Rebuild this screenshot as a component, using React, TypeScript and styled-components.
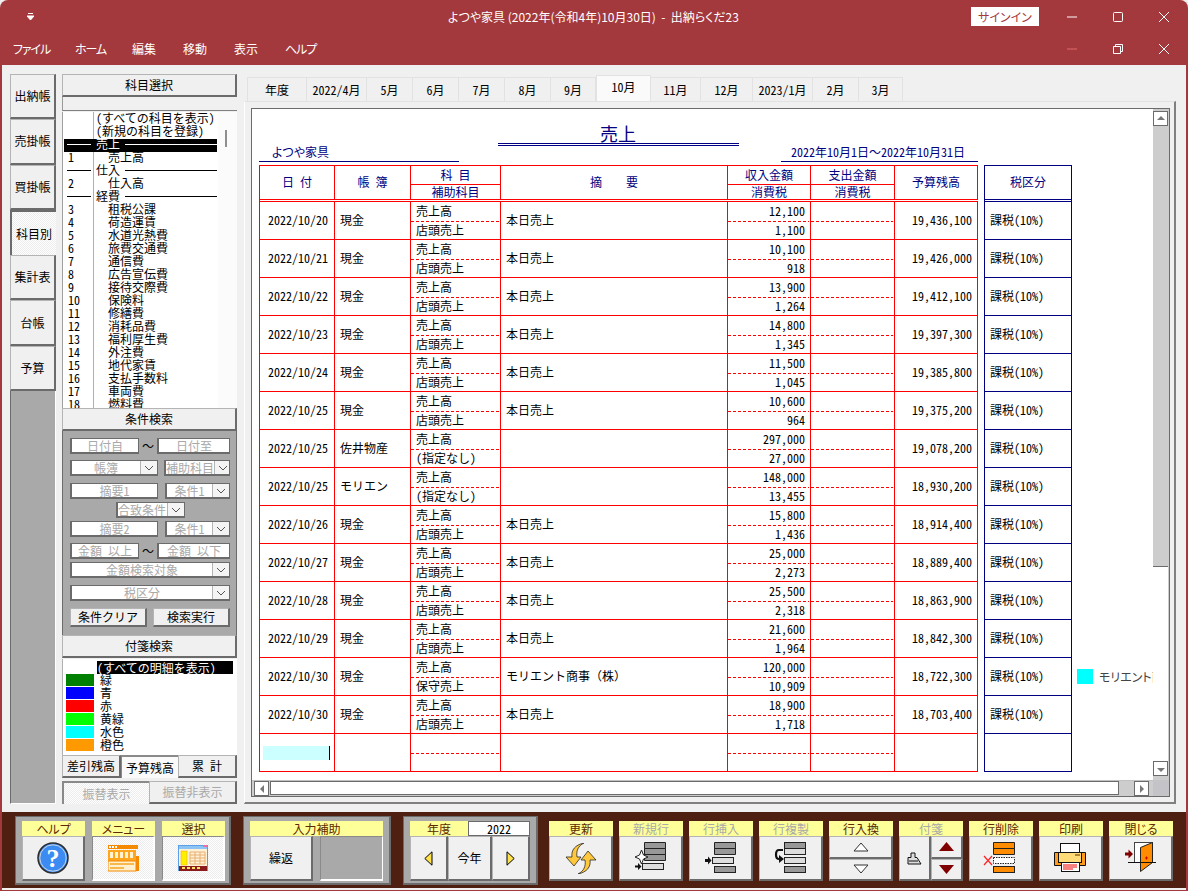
import React from 'react';
import styled, { createGlobalStyle, css } from 'styled-components';

const RED = '#a4393d';
const GRAY = '#a9a9a9';
const PANEL = '#f0f0f0';
const NAVY = '#000080';

const GlobalStyle = createGlobalStyle`
  * { box-sizing: border-box; }
  html, body { margin: 0; padding: 0; background: ${PANEL}; }
  body {
    font-family: "Noto Sans CJK JP", "Liberation Sans", sans-serif;
    font-size: 12px;
    line-height: 1;
    font-feature-settings: "hwid";
    color: #000;
  }
`;

const raised = css`
  border-style: solid;
  border-width: 1px 2px 2px 1px;
  border-color: #b4b4b4 #6b6b6b #6b6b6b #b4b4b4;
  background: ${PANEL};
`;

const stipple = css`
  background: repeating-conic-gradient(#fff 0 25%, #ececec 0 50%) 0 0 / 2px 2px;
`;

const Window = styled.div`
  width: 1188px;
  height: 891px;
  background: ${RED};
  border-radius: 8px 8px 0 0;
  overflow: hidden;
  display: flex;
  flex-direction: column;
  padding: 0 2px 1px 2px;
`;

const TitleBar = styled.div`
  height: 33px;
  margin: 0 -2px;
  padding-right: 1px;
  display: grid;
  grid-template-columns: 1fr auto 1fr;
  align-items: center;
  color: #fff;
  font-feature-settings: "palt";
`;

const QuickAccess = styled.div`
  padding-left: 27px;
  display: flex;
`;

const TitleText = styled.div`
  font-size: 12px;
  white-space: pre;
`;

const TitleRight = styled.div`
  display: flex;
  justify-content: flex-end;
  align-items: center;
`;

const SignIn = styled.div`
  width: 68px;
  height: 19px;
  margin-right: 10px;
  background: #fff;
  color: ${RED};
  font-size: 12px;
  display: flex;
  align-items: center;
  justify-content: center;
`;

const WinButton = styled.div`
  width: 46px;
  display: flex;
  justify-content: center;
  align-items: center;
`;

const MenuBar = styled.div`
  height: 32px;
  margin: 0 -2px;
  padding: 0 1px 0 13px;
  display: flex;
  align-items: center;
  color: #fff;
  font-feature-settings: "palt";
`;

const MenuItem = styled.div<{ $w: number; $kana?: boolean }>`
  width: ${(p) => p.$w}px;
  flex: none;
  white-space: nowrap;
  font-size: 12px;
  letter-spacing: ${(p) => (p.$kana ? -1.1 : 0)}px;
`;

const MenuSpacer = styled.div`
  flex: 1;
`;

const Client = styled.div`
  flex: 1;
  min-height: 0;
  background: ${PANEL};
  display: flex;
  flex-direction: column;
  padding-bottom: 2px;
`;

const Workspace = styled.div`
  flex: 1;
  min-height: 0;
  display: flex;
  padding: 9px 10px 8px 8px;
`;

const SideCol = styled.div`
  width: 46px;
  display: flex;
  flex-direction: column;
  margin-right: 6px;
`;

const SideTab = styled.div<{ $active?: boolean }>`
  height: 45.3px;
  flex: none;
  display: flex;
  align-items: center;
  justify-content: center;
  font-size: 12px;
  ${raised}
  ${(p) => p.$active && css`
    ${stipple}
    border-color: #6b6b6b #f0f0f0 #f0f0f0 #6b6b6b;
    border-width: 2px 0 0 2px;
  `}
`;

const SideFill = styled.div`
  flex: 1;
  background: ${GRAY};
  border-left: 1px solid #6b6b6b;
  border-right: 1px solid #fff;
  border-bottom: 1px solid #fff;
`;

const PanelCol = styled.div`
  width: 175px;
  display: flex;
  flex-direction: column;
  margin-right: 7px;
`;

const PanelHead = styled.div`
  height: 23px;
  flex: none;
  display: flex;
  align-items: center;
  justify-content: center;
  ${raised}
`;

const Strip = styled.div`
  height: 14px;
  flex: none;
  background: ${PANEL};
  border-left: 1px solid #9a9a9a;
  border-bottom: 1px solid #808080;
`;

const ListWrap = styled.div`
  height: 296px;
  flex: none;
  display: flex;
  margin-top: 1px;
  background: #fbfbfb;
`;

const SubjectList = styled.div`
  width: 156px;
  padding: 1px 0 0 1px;
  background: #fff;
  overflow: hidden;
  background-image: linear-gradient(#b0b0b0, #b0b0b0);
  background-size: 1px 100%;
  background-position: 30px 0;
  background-repeat: no-repeat;
  border-left: 1px solid #a0a0a0;
`;

const ListScroll = styled.div`
  flex: 1;
  padding: 18px 0 0 7px;
`;

const ListThumb = styled.div`
  width: 2px;
  height: 17px;
  background: #8f8f8f;
`;

const SubjectRow = styled.div<{ $selected?: boolean }>`
  height: 13px;
  display: flex;
  align-items: center;
  white-space: nowrap;
  width: 153px;
  ${(p) => p.$selected && 'background: #000; color: #fff;'}
`;

const RowText = styled.span`
  margin-top: -4px;
`;

const RowNo = styled(RowText)`
  width: 32px;
  padding-left: 4px;
  flex: none;
`;

const RowName = styled(RowText)`
  padding-left: 12px;
`;

const RuleShort = styled.span`
  width: 24px;
  height: 1px;
  margin: -2px 5px 0 3px;
  background: currentColor;
  flex: none;
`;

const RuleLong = styled.span`
  flex: 1;
  height: 1px;
  margin: -2px 0 0 5px;
  background: currentColor;
`;

const SearchPanel = styled.div`
  height: 204px;
  flex: none;
  background: ${GRAY};
  border-left: 1px solid #6b6b6b;
  border-right: 1px solid #6b6b6b;
  padding: 7px 6px 0 7px;
`;

const SearchRow = styled.div<{ $top: number; $center?: boolean }>`
  display: flex;
  align-items: center;
  margin-top: ${(p) => p.$top}px;
  justify-content: ${(p) => (p.$center ? 'center' : 'space-between')};
`;

const Field = styled.div<{ $w?: number }>`
  height: 16px;
  width: ${(p) => (p.$w ? `${p.$w}px` : '100%')};
  flex: none;
  background: #fff;
  color: ${GRAY};
  border: 1px solid #6b6b6b;
  border-bottom-width: 2px;
  border-left-width: 2px;
  display: flex;
  align-items: center;
  overflow: hidden;
  white-space: nowrap;
`;

const FieldText = styled.span`
  flex: 1;
  text-align: center;
`;

const Drop = styled.span`
  width: 17px;
  height: 14px;
  flex: none;
  background: #f4f4f4;
  border-left: 1px solid #b4b4b4;
  display: flex;
  align-items: center;
  justify-content: center;
`;

// full-width glyphs, where the page-wide half-width feature would squeeze them
const Wide = styled.span`
  font-feature-settings: normal;
`;

const Wave = styled(Wide)`
  width: 18px;
  text-align: center;
  flex: none;
`;

const SearchButton = styled.div`
  width: 77px;
  height: 19px;
  display: flex;
  align-items: center;
  justify-content: center;
  ${raised}
`;

const NoteList = styled.div`
  height: 96px;
  flex: none;
  background: #fff;
  margin-top: 1px;
  padding: 2px 0 0 3px;
  border-left: 1px solid #b0b0b0;
`;

const NoteRow = styled.div`
  height: 13px;
  display: flex;
  align-items: center;
`;

const Swatch = styled.span<{ $color?: string }>`
  width: 28px;
  height: 12px;
  flex: none;
  margin: -2px 6px 0 0;
  background: ${(p) => p.$color || 'transparent'};
`;

const NoteName = styled.span`
  margin-top: -2px;
`;

const NoteAll = styled.span`
  width: 136px;
  margin-left: -3px;
  height: 13px;
  line-height: 13px;
  background: #000;
  color: #fff;
`;

const TabsRow = styled.div`
  display: flex;
  flex: none;
  height: 23px;
`;

const BalanceTab = styled.div<{ $active?: boolean }>`
  flex: 1;
  display: flex;
  align-items: center;
  justify-content: center;
  ${raised}
  ${(p) => p.$active && css`
    background: #fafafa;
    border-width: 2px 0 0 1px;
    border-color: #8a8a8a;
  `}
`;

const TransferRow = styled.div`
  display: flex;
  flex: none;
  height: 23px;
  margin-top: 3px;
`;

const TransferButton = styled.div<{ $active?: boolean }>`
  flex: 1;
  display: flex;
  align-items: center;
  justify-content: center;
  color: ${GRAY};
  ${raised}
  ${(p) => p.$active && css`
    ${stipple}
    border-width: 2px 0 0 2px;
    border-color: #8a8a8a #fff #fff #8a8a8a;
  `}
`;

const MainCol = styled.div`
  flex: 1;
  min-width: 0;
  display: flex;
  flex-direction: column;
  padding-top: 1px;
`;

const MonthTabs = styled.div`
  display: flex;
  align-items: flex-end;
  height: 26px;
  flex: none;
  padding-left: 3px;
`;

const MonthTab = styled.div<{ $w: number; $active?: boolean }>`
  width: ${(p) => p.$w}px;
  height: ${(p) => (p.$active ? 26 : 24)}px;
  flex: none;
  display: flex;
  align-items: center;
  justify-content: center;
  background: ${(p) => (p.$active ? '#fafafa' : PANEL)};
  border: 1px solid #e2e2e2;
  border-bottom: 0;
  border-left-width: ${(p) => (p.$active ? 1 : 0)}px;
  padding-bottom: ${(p) => (p.$active ? 3 : 0)}px;
  &:first-child { border-left-width: 1px; }
`;

const TabPage = styled.div`
  flex: 1;
  min-height: 0;
  border-top: 1px solid #e2e2e2;
  border-left: 1px solid #fff;
  border-right: 2px solid #808080;
  border-bottom: 2px solid #808080;
  padding: 6px 4px 5px 6px;
  display: flex;
`;

const Frame = styled.div`
  flex: 1;
  min-width: 0;
  border: 1px solid #6b6b6b;
  background: #fff;
  display: grid;
  grid-template-columns: 1fr 16px;
  grid-template-rows: 1fr 16px;
`;

const Sheet = styled.div`
  padding-left: 7px;
  overflow: hidden;
  min-width: 0;
  min-height: 0;
`;

const SheetHead = styled.div`
  height: 56px;
  width: 719px;
  display: grid;
  grid-template-columns: 200px 241px 197px;
  justify-content: space-between;
  color: ${NAVY};
`;

const Company = styled.div`
  align-self: end;
  height: 18px;
  margin-bottom: 3px;
  padding-left: 13px;
  border-bottom: 1px solid ${NAVY};
  font-feature-settings: "palt";
  line-height: 15px;
`;

const Title = styled.div`
  align-self: start;
  margin: 15px 2px 0 -2px;
  height: 22px;
  border-bottom: 3px double ${NAVY};
  font-size: 18px;
  line-height: 19px;
  text-align: center;
`;

const Period = styled.div`
  align-self: end;
  height: 18px;
  margin-bottom: 3px;
  padding-left: 10px;
  border-bottom: 1px solid ${NAVY};
  line-height: 15px;
  white-space: nowrap;
`;

const LedgerRow = styled.div`
  display: flex;
  white-space: nowrap;
  height: 38px;
`;

const HeadRow = styled(LedgerRow)`
  height: 37px;
`;

const Cells = styled.div<{ $head?: boolean }>`
  width: 719px;
  flex: none;
  display: grid;
  grid-template-columns: 75px 76px 90px 227px 83px 84px 83px;
  border-left: 1px solid #f00;
  border-bottom: 1px solid #f00;
  ${(p) => p.$head && css`
    border-top: 1px solid #f00;
    border-bottom: 3px double #f00;
    color: ${NAVY};
  `}
`;

const Cell = styled.div<{ $align?: 'left' | 'center' | 'right'; $stack?: boolean }>`
  border-right: 1px solid #f00;
  display: flex;
  min-width: 0;
  ${(p) => (p.$stack
    ? 'flex-direction: column;'
    : css`
      align-items: center;
      justify-content: ${p.$align === 'right' ? 'flex-end' : p.$align === 'center' ? 'center' : 'flex-start'};
      padding: 0 5px 2px;
    `)}
`;

const DateCell = styled(Cell)`
  justify-content: flex-end;
  padding: 0 6px 2px 0;
`;

const Upper = styled.div<{ $right?: boolean }>`
  height: 19px;
  display: flex;
  align-items: center;
  padding: 0 5px 2px;
  justify-content: ${(p) => (p.$right ? 'flex-end' : 'flex-start')};
`;

const Lower = styled(Upper)`
  height: 17px;
`;

const Dash = styled.div`
  height: 1px;
  flex: none;
  margin-right: 1px;
  background: repeating-linear-gradient(90deg, #f00 0 3px, transparent 3px 5px);
`;

const HeadUpper = styled.div`
  height: 19px;
  display: flex;
  align-items: center;
  justify-content: center;
  border-bottom: 1px solid #f00;
`;

const HeadLower = styled.div`
  height: 14px;
  display: flex;
  align-items: center;
  justify-content: center;
`;

const TaxCell = styled.div<{ $head?: boolean }>`
  width: 88px;
  flex: none;
  margin-left: 6px;
  border-left: 1px solid ${NAVY};
  border-right: 1px solid ${NAVY};
  border-bottom: 1px solid ${NAVY};
  display: flex;
  align-items: center;
  padding: 0 0 2px 5px;
  ${(p) => p.$head && css`
    border-top: 1px solid ${NAVY};
    border-bottom: 3px double ${NAVY};
    color: ${NAVY};
    justify-content: center;
    padding-left: 0;
  `}
`;

const NoteCell = styled.div`
  margin-left: 5px;
  display: flex;
  align-items: center;
  color: #444;
  font-feature-settings: "palt";
  padding-bottom: 1px;
`;

const NoteChip = styled.span`
  width: 16px;
  height: 15px;
  margin-right: 6px;
  background: #0ff;
  flex: none;
`;

const EntryBox = styled.div`
  width: 67px;
  height: 14px;
  margin: 0 0 0 3px;
  background: #ccffff;
  border-right: 1px solid #000;
`;

const EntryCell = styled.div`
  border-right: 1px solid #f00;
  display: flex;
  align-items: center;
  padding-top: 1px;
`;

const VBar = styled.div`
  background: #cdcdcd;
  display: flex;
  flex-direction: column;
  padding-top: 2px;
  padding-right: 1px;
`;

const ScrollBtn = styled.div`
  width: 15px;
  height: 15px;
  flex: none;
  background: #fff;
  border: 1px solid #6b6b6b;
  display: flex;
  align-items: center;
  justify-content: center;
`;

const VThumb = styled.div`
  flex: none;
  height: 195px;
  background: #fff;
  border-top: 1px solid #6b6b6b;
`;

const VTrack = styled.div`
  flex: 1;
`;

const VBottom = styled.div`
  height: 4px;
  flex: none;
`;

const HBar = styled.div`
  background: #cdcdcd;
  display: flex;
  padding: 0 4px 1px 2px;
  border-top: 1px solid #c0c0c0;
`;

const HThumb = styled.div`
  flex: none;
  width: 849px;
  margin-left: 1px;
  background: #fff;
  border: 1px solid #6b6b6b;
`;

const Corner = styled.div`
  background: #c4c4c8;
`;

const Toolbar = styled.div`
  height: 76px;
  flex: none;
  background: #4f2012;
  display: flex;
  padding: 4px 0 0 13px;
`;

const Group = styled.div<{ $w: number; $gap?: number }>`
  width: ${(p) => p.$w}px;
  height: 69px;
  flex: none;
  margin-right: 12px;
  padding: 4px 0 0 6px;
  background: ${GRAY};
  border: 1px solid #6b6b6b;
  border-bottom-width: 2px;
  border-right-width: 2px;
  display: flex;
  gap: ${(p) => p.$gap ?? 0}px;
`;

const Tool = styled.div<{ $w: number }>`
  width: ${(p) => p.$w}px;
  flex: none;
  display: flex;
  flex-direction: column;
`;

const ToolLabel = styled.div<{ $off?: boolean }>`
  height: 15px;
  flex: none;
  background: #ffff99;
  color: ${(p) => (p.$off ? GRAY : '#5c2a00')};
  display: flex;
  align-items: center;
  justify-content: center;
  font-feature-settings: "palt";
`;

const ToolButton = styled.div<{ $flat?: boolean }>`
  height: 45px;
  flex: none;
  display: flex;
  align-items: center;
  justify-content: center;
  ${raised}
  ${(p) => p.$flat && css`
    ${stipple}
    border-color: #8a8a8a #fff #fff #8a8a8a;
  `}
`;

const BlankButton = styled(ToolButton)`
  background: ${GRAY};
  border-color: #8a8a8a #fff #fff #8a8a8a;
  border-width: 1px 1px 2px 1px;
`;

const SplitTool = styled.div`
  display: flex;
  gap: 7px;
  height: 45px;
`;

const ToolRow = styled.div`
  display: flex;
  height: 15px;
`;

const YearLabel = styled(ToolLabel)`
  width: 58px;
`;

const YearValue = styled.div`
  flex: 1;
  background: #fff;
  border: 1px solid #6b6b6b;
  display: flex;
  align-items: center;
  justify-content: center;
`;

const YearButtons = styled.div`
  display: flex;
  height: 45px;
`;

const YearButton = styled(ToolButton)<{ $w: number }>`
  width: ${(p) => p.$w}px;
`;

const RightTools = styled.div`
  display: flex;
  gap: 6px;
  margin-left: -1px;
  padding-top: 5px;
`;

const PairButton = styled.div`
  flex: 1;
  min-height: 0;
  display: flex;
  align-items: center;
  justify-content: center;
  ${raised}
`;

const PairCol = styled.div<{ $w: number }>`
  width: ${(p) => p.$w}px;
  height: 45px;
  flex: none;
  display: flex;
  flex-direction: column;
`;

const PairRow = styled.div`
  display: flex;
  height: 45px;
`;

const PairSide = styled.div`
  width: 32px;
  height: 45px;
  display: flex;
  align-items: center;
  justify-content: center;
  ${raised}
`;

// ---- icons ----

const Chevron = () => (
  <svg width="10" height="6" viewBox="0 0 10 6"><path d="M1 1l4 4 4-4" fill="none" stroke="#555" strokeWidth="1" /></svg>
);

const QatIcon = () => (
  <svg width="7" height="7" viewBox="0 0 7 7"><path d="M1 .5h5M0 3h7L3.500 7z" stroke="#fff" strokeWidth="1" fill="#fff" /></svg>
);

const WinMin = ({ color = '#fff' }: { color?: string }) => (
  <svg width="10" height="10" viewBox="0 0 10 10"><path d="M0 5h10" stroke={color} strokeWidth="1" /></svg>
);

const WinMax = () => (
  <svg width="10" height="10" viewBox="0 0 10 10"><rect x=".5" y=".5" width="9" height="9" rx="1" fill="none" stroke="#fff" /></svg>
);

const WinRestore = () => (
  <svg width="10" height="10" viewBox="0 0 10 10"><path d="M.5 2.500h7v7h-7zM2.500 2.500v-2h7v7h-2" fill="none" stroke="#fff" /></svg>
);

const WinClose = () => (
  <svg width="10" height="10" viewBox="0 0 10 10"><path d="M0 0l10 10M10 0L0 10" stroke="#fff" strokeWidth="1" /></svg>
);

const Tri = ({ dir }: { dir: 'up' | 'down' | 'left' | 'right' }) => {
  const d = {
    up: 'M4 1L8 5H0z', down: 'M4 7L0 3h8z', left: 'M2 4l4-4v8z', right: 'M6 4L2 0v8z',
  }[dir];
  return <svg width="8" height="8" viewBox="0 0 8 8"><path d={d} fill="#777" /></svg>;
};

const HelpIcon = () => (
  <svg width="32" height="32" viewBox="0 0 32 32">
    <circle cx="16" cy="16" r="15" fill="#3b8bf2" stroke="#2c2c2c" strokeWidth="1.500" />
    <circle cx="16" cy="16" r="13.200" fill="none" stroke="#c8d4e4" strokeWidth="1" />
    <text x="16" y="25" textAnchor="middle" fontFamily="Liberation Serif" fontWeight="bold" fontSize="26" fill="#fff">?</text>
  </svg>
);

const MenuIcon = () => (
  <svg width="31" height="27" viewBox="0 0 31 27">
    <rect x="0" y="0" width="30" height="4" fill="#f58a00" />
    <path d="M1 1h2v2H1zM4 1h2v2H4zM7 1h2v2H7z" fill="#fff" />
    <rect x="0" y="5" width="28" height="11" fill="#ffa51e" />
    <path d="M2 7h3v6H2zM7 7h3v6H7zM12 7h3v6h-3zM17 7h3v6h-3zM22 7h3v6h-3z" fill="#fff3d0" />
    <rect x="28" y="11" width="3" height="15" fill="#f58a00" />
    <rect x="0" y="16" width="28" height="10" fill="#fff1cf" stroke="#f58a00" />
    <path d="M2 19h24M2 23h14" stroke="#f5a623" strokeWidth="1.500" />
  </svg>
);

const SelectIcon = () => (
  <svg width="30" height="27" viewBox="0 0 30 27">
    <rect x=".5" y=".5" width="29" height="25" fill="#fff0d8" stroke="#5aa0e8" />
    <rect x="1" y="1" width="28" height="3" fill="#8cc4f4" />
    <rect x="25" y="0" width="4" height="2" fill="#f06ea0" />
    <rect x="3" y="6" width="6" height="14" fill="#ffee00" stroke="#e8a800" strokeWidth=".5" />
    <path d="M12 7h15v12H12zM12 10h15M12 13h15M12 16h15M17 7v12M22 7v12" fill="none" stroke="#e8b070" />
    <rect x="1" y="21" width="28" height="5" fill="#8b1a1a" />
    <path d="M4 23h3M9 23h3M14 23h3M19 23h3" stroke="#ffe060" strokeWidth="2" />
  </svg>
);

const LeftArrow = () => (
  <svg width="9" height="15" viewBox="0 0 9 15"><path d="M8 .8v13.400L.8 7.500z" fill="#ffe14d" stroke="#000" /></svg>
);

const RightArrow = () => (
  <svg width="9" height="15" viewBox="0 0 9 15"><path d="M1 .8v13.400L8.200 7.500z" fill="#ffe14d" stroke="#000" /></svg>
);

const RefreshIcon = () => (
  <svg width="32" height="31" viewBox="0 0 32 31">
    <path d="M19 0C10 2 6 7 7 14H1l8 9 7-9h-4C11 8 13 3 19 0z" fill="#ffc83c" stroke="#2a2a2a" strokeWidth=".8" />
    <path d="M13 31c9-2 13-7 12-14h6l-8-9-7 9h4c1 6-1 11-7 14z" fill="#ffc83c" stroke="#2a2a2a" strokeWidth=".8" />
  </svg>
);

const RowIcon = ({ children }: { children: React.ReactNode }) => (
  <svg width="61" height="42" viewBox="1 1 61 42">{children}</svg>
);

const NewRowIcon = () => (
  <RowIcon>
    <path d="M25.500 6.500h21v6h-21zM25.500 12.500h21v6h-21zM25.500 18.500h21v6h-21z" fill="#989898" stroke="#222" />
    <path d="M22.500 14l2 5 4.500 2-4.500 2-2 5-2-5-4.500-2 4.500-2z" fill="#fff" stroke="#222" />
    <rect x="23.500" y="27.500" width="21" height="6" fill="#ddd" stroke="#222" />
    <path d="M16 29.500h3v-2.500l3.500 3.500-3.500 3.500v-2.500h-3z" fill="#111" />
  </RowIcon>
);

const InsertRowIcon = () => (
  <RowIcon>
    <path d="M25.500 6.500h21v6h-21zM25.500 12.500h21v6h-21z" fill="#989898" stroke="#222" />
    <rect x="23.500" y="21.500" width="21" height="6" fill="#ddd" stroke="#222" />
    <rect x="25.500" y="30.500" width="21" height="6" fill="#989898" stroke="#222" />
    <path d="M16 23h3v-2.500l3.500 4-3.500 4V26h-3z" fill="#111" />
  </RowIcon>
);

const CopyRowIcon = () => (
  <RowIcon>
    <rect x="25.500" y="6.500" width="21" height="6" fill="#989898" stroke="#222" />
    <rect x="25.500" y="12.500" width="21" height="6" fill="#ddd" stroke="#222" />
    <rect x="25.500" y="21.500" width="21" height="6" fill="#ddd" stroke="#222" />
    <rect x="25.500" y="30.500" width="21" height="6" fill="#989898" stroke="#222" />
    <path d="M24 14h-4c-4 0-4 9 0 9" fill="none" stroke="#111" strokeWidth="2.200" />
    <path d="M20 19l5 4-5 4z" fill="#111" />
  </RowIcon>
);

const UpOutline = () => (
  <svg width="16" height="10" viewBox="0 0 16 10"><path d="M8 1l7 8H1z" fill="#fff" stroke="#333" /></svg>
);

const DownOutline = () => (
  <svg width="16" height="10" viewBox="0 0 16 10"><path d="M8 9L1 1h14z" fill="#fff" stroke="#333" /></svg>
);

const NoteTagIcon = () => (
  <svg width="15" height="13" viewBox="0 0 15 13">
    <path d="M1 5.500h3V1h4v4.500h2l4 6.500H1z" fill="#ddd" stroke="#111" />
    <path d="M2 9h9" stroke="#111" />
  </svg>
);

const SolidUp = () => (
  <svg width="15" height="9" viewBox="0 0 15 9"><path d="M7.500 0L15 9H0z" fill="#800000" /></svg>
);

const SolidDown = () => (
  <svg width="15" height="9" viewBox="0 0 15 9"><path d="M7.500 9L0 0h15z" fill="#800000" /></svg>
);

const DeleteRowIcon = () => (
  <RowIcon>
    <path d="M24.500 6.500h21v6h-21zM24.500 12.500h21v6h-21z" fill="#ff8c00" stroke="#222" />
    <rect x="24.500" y="21.500" width="21" height="6" fill="#fff" stroke="#222" strokeDasharray="1.500 1" />
    <rect x="24.500" y="30.500" width="21" height="6" fill="#ff8c00" stroke="#222" />
    <path d="M15 20l8 9M23 20l-8 9" stroke="#f22" strokeWidth="1.200" />
  </RowIcon>
);

const PrintIcon = () => (
  <RowIcon>
    <rect x="21.500" y="7.500" width="19" height="10" fill="#fff" stroke="#111" />
    <path d="M15.500 16.500h31v13h-31z" fill="#ff9a1a" stroke="#111" />
    <rect x="19.500" y="16.500" width="23" height="10" fill="#ffdc78" stroke="#111" />
    <rect x="36" y="18" width="5" height="2" fill="#b08030" />
    <rect x="22.500" y="26.500" width="18" height="9" fill="#fff" stroke="#111" />
    <path d="M24 29h14M24 31h14M24 33h10" stroke="#e00" />
  </RowIcon>
);

const CloseIcon = () => (
  <RowIcon>
    <rect x="25.500" y="6.500" width="18" height="20" fill="#fff" stroke="#444" />
    <path d="M43.500 6.500L31.500 11.500V35.500L43.500 26.500z" fill="#ff8c00" stroke="#222" />
    <path d="M19 26.500h28" stroke="#111" />
    <path d="M16 16.500h3.500v-3l4.500 4.500-4.500 4.500v-3H16z" fill="#800000" />
    <path d="M36 22h3M37.500 20.500v3" stroke="#c00" />
  </RowIcon>
);

// ---- data ----

const SUBJECTS: [string, string][] = [
  ['3', '租税公課'], ['4', '荷造運賃'], ['5', '水道光熱費'], ['6', '旅費交通費'], ['7', '通信費'],
  ['8', '広告宣伝費'], ['9', '接待交際費'], ['10', '保険料'], ['11', '修繕費'], ['12', '消耗品費'],
  ['13', '福利厚生費'], ['14', '外注費'], ['15', '地代家賃'], ['16', '支払手数料'], ['17', '車両費'], ['18', '燃料費'],
];

const NOTES: [string, string][] = [
  ['#008000', '緑'], ['#0000ff', '青'], ['#ff0000', '赤'], ['#00ff00', '黄緑'], ['#00ffff', '水色'], ['#ff9900', '橙色'],
];

const MONTHS: [string, number, boolean?][] = [
  ['年度', 60], ['2022/4月', 60], ['5月', 46], ['6月', 46], ['7月', 46], ['8月', 46], ['9月', 45],
  ['10月', 55, true], ['11月', 50], ['12月', 52], ['2023/1月', 60], ['2月', 46], ['3月', 44],
];

const MENUS: [string, number, boolean?][] = [
  ['ファイル', 62, true], ['ホーム', 57, true], ['編集', 51], ['移動', 51], ['表示', 51], ['ヘルプ', 40, true],
];

type Entry = {
  date: string; book: string; sub: string; memo: string; inc: string; tax: string; bal: string; note?: string;
};

const shop = (date: string, inc: string, tax: string, bal: string): Entry => ({
  date, book: '現金', sub: '店頭売上', memo: '本日売上', inc, tax, bal,
});

const ENTRIES: Entry[] = [
  shop('2022/10/20', '12,100', '1,100', '19,436,100'),
  shop('2022/10/21', '10,100', '918', '19,426,000'),
  shop('2022/10/22', '13,900', '1,264', '19,412,100'),
  shop('2022/10/23', '14,800', '1,345', '19,397,300'),
  shop('2022/10/24', '11,500', '1,045', '19,385,800'),
  shop('2022/10/25', '10,600', '964', '19,375,200'),
  {
    date: '2022/10/25', book: '佐井物産', sub: '(指定なし)', memo: '', inc: '297,000', tax: '27,000', bal: '19,078,200',
  },
  {
    date: '2022/10/25', book: 'モリエン', sub: '(指定なし)', memo: '', inc: '148,000', tax: '13,455', bal: '18,930,200',
  },
  shop('2022/10/26', '15,800', '1,436', '18,914,400'),
  shop('2022/10/27', '25,000', '2,273', '18,889,400'),
  shop('2022/10/28', '25,500', '2,318', '18,863,900'),
  shop('2022/10/29', '21,600', '1,964', '18,842,300'),
  {
    date: '2022/10/30', book: '現金', sub: '保守売上', memo: 'モリエント商事（株）', inc: '120,000', tax: '10,909', bal: '18,722,300', note: 'モリエント商',
  },
  shop('2022/10/30', '18,900', '1,718', '18,703,400'),
];

const Section = ({ name, selected }: { name: string; selected?: boolean }) => (
  <SubjectRow $selected={selected}>
    <RuleShort />
    <RowText>{name}</RowText>
    <RuleLong />
  </SubjectRow>
);

const Subject = ({ no, name }: { no: string; name: string }) => (
  <SubjectRow>
    <RowNo>{no}</RowNo>
    <RowName>{name}</RowName>
  </SubjectRow>
);

const Combo = ({ w, text }: { w?: number; text: string }) => (
  <Field $w={w}>
    <FieldText>{text}</FieldText>
    <Drop><Chevron /></Drop>
  </Field>
);

const Input = ({ w, text }: { w: number; text: string }) => (
  <Field $w={w}><FieldText>{text}</FieldText></Field>
);

const SubjectPanel = () => (
  <>
    <PanelHead>科目選択</PanelHead>
    <Strip />
    <ListWrap>
      <SubjectList>
        <SubjectRow><RowNo /><RowText>（すべての科目を表示）</RowText></SubjectRow>
        <SubjectRow><RowNo /><RowText>（新規の科目を登録）</RowText></SubjectRow>
        <Section name="売上" selected />
        <Subject no="1" name="売上高" />
        <Section name="仕入" />
        <Subject no="2" name="仕入高" />
        <Section name="経費" />
        {SUBJECTS.map(([no, name]) => <Subject key={no} no={no} name={name} />)}
      </SubjectList>
      <ListScroll><ListThumb /></ListScroll>
    </ListWrap>
  </>
);

const ConditionPanel = () => (
  <>
    <PanelHead>条件検索</PanelHead>
    <SearchPanel>
      <SearchRow $top={0}><Input w={69} text="日付自" /><Wave>～</Wave><Input w={73} text="日付至" /></SearchRow>
      <SearchRow $top={6}><Combo w={88} text="帳簿" /><Combo w={66} text="補助科目" /></SearchRow>
      <SearchRow $top={7}><Input w={88} text="摘要1" /><Combo w={65} text="条件1" /></SearchRow>
      <SearchRow $top={3} $center><Combo w={69} text="合致条件" /></SearchRow>
      <SearchRow $top={3}><Input w={88} text="摘要2" /><Combo w={65} text="条件1" /></SearchRow>
      <SearchRow $top={6}><Input w={69} text="金額 以上" /><Wave>～</Wave><Input w={73} text="金額 以下" /></SearchRow>
      <SearchRow $top={3}><Combo text="金額検索対象" /></SearchRow>
      <SearchRow $top={7}><Combo text="税区分" /></SearchRow>
      <SearchRow $top={7}><SearchButton>条件クリア</SearchButton><SearchButton>検索実行</SearchButton></SearchRow>
    </SearchPanel>
  </>
);

const NotePanel = () => (
  <>
    <PanelHead>付箋検索</PanelHead>
    <NoteList>
      <NoteRow><Swatch /><NoteAll>（すべての明細を表示）</NoteAll></NoteRow>
      {NOTES.map(([color, name]) => (
        <NoteRow key={name}><Swatch $color={color} /><NoteName>{name}</NoteName></NoteRow>
      ))}
    </NoteList>
    <TabsRow>
      <BalanceTab>差引残高</BalanceTab>
      <BalanceTab $active>予算残高</BalanceTab>
      <BalanceTab>累 計</BalanceTab>
    </TabsRow>
    <TransferRow>
      <TransferButton $active>振替表示</TransferButton>
      <TransferButton>振替非表示</TransferButton>
    </TransferRow>
  </>
);

const EntryRow = ({ e }: { e: Entry }) => (
  <LedgerRow>
    <Cells>
      <DateCell>{e.date}</DateCell>
      <Cell>{e.book}</Cell>
      <Cell $stack>
        <Upper>売上高</Upper>
        <Dash />
        <Lower>{e.sub}</Lower>
      </Cell>
      <Cell><Wide>{e.memo}</Wide></Cell>
      <Cell $stack>
        <Upper $right>{e.inc}</Upper>
        <Dash />
        <Lower $right>{e.tax}</Lower>
      </Cell>
      <Cell $stack>
        <Upper />
        <Dash />
        <Lower />
      </Cell>
      <Cell $align="right">{e.bal}</Cell>
    </Cells>
    <TaxCell>課税(10%)</TaxCell>
    {e.note && <NoteCell><NoteChip />{e.note}</NoteCell>}
  </LedgerRow>
);

const Ledger = () => (
  <Sheet>
    <SheetHead>
      <Company>よつや家具</Company>
      <Title>売上</Title>
      <Period>2022年10月1日<Wide>～</Wide>2022年10月31日</Period>
    </SheetHead>
    <HeadRow>
      <Cells $head>
        <Cell $align="center">日 付</Cell>
        <Cell $align="center">帳 簿</Cell>
        <Cell $stack><HeadUpper>科 目</HeadUpper><HeadLower>補助科目</HeadLower></Cell>
        <Cell $align="center"><Wide>摘　　要</Wide></Cell>
        <Cell $stack><HeadUpper>収入金額</HeadUpper><HeadLower>消費税</HeadLower></Cell>
        <Cell $stack><HeadUpper>支出金額</HeadUpper><HeadLower>消費税</HeadLower></Cell>
        <Cell $align="center">予算残高</Cell>
      </Cells>
      <TaxCell $head>税区分</TaxCell>
    </HeadRow>
    {ENTRIES.map((e, i) => <EntryRow key={`${e.date}-${i}`} e={e} />)}
    <LedgerRow>
      <Cells>
        <EntryCell><EntryBox /></EntryCell>
        <Cell />
        <Cell $stack><Upper /><Dash /><Lower /></Cell>
        <Cell />
        <Cell $stack><Upper /><Dash /><Lower /></Cell>
        <Cell $stack><Upper /><Dash /><Lower /></Cell>
        <Cell />
      </Cells>
      <TaxCell />
    </LedgerRow>
  </Sheet>
);

const IconTool = ({ label, off, icon }: { label: string; off?: boolean; icon: React.ReactNode }) => (
  <Tool $w={64}>
    <ToolLabel $off={off}>{label}</ToolLabel>
    <ToolButton>{icon}</ToolButton>
  </Tool>
);

const BottomBar = () => (
  <Toolbar>
    <Group $w={216} $gap={7}>
      <Tool $w={63}>
        <ToolLabel>ヘルプ</ToolLabel>
        <ToolButton><HelpIcon /></ToolButton>
      </Tool>
      <Tool $w={63}>
        <ToolLabel>メニュー</ToolLabel>
        <ToolButton $flat><MenuIcon /></ToolButton>
      </Tool>
      <Tool $w={63}>
        <ToolLabel>選択</ToolLabel>
        <ToolButton $flat><SelectIcon /></ToolButton>
      </Tool>
    </Group>
    <Group $w={148}>
      <Tool $w={133}>
        <ToolLabel>入力補助</ToolLabel>
        <SplitTool>
          <Tool $w={63}><ToolButton>繰返</ToolButton></Tool>
          <Tool $w={63}><BlankButton /></Tool>
        </SplitTool>
      </Tool>
    </Group>
    <Group $w={135}>
      <Tool $w={120}>
        <ToolRow>
          <YearLabel>年度</YearLabel>
          <YearValue>2022</YearValue>
        </ToolRow>
        <YearButtons>
          <YearButton $w={38}><LeftArrow /></YearButton>
          <YearButton $w={44}>今年</YearButton>
          <YearButton $w={38}><RightArrow /></YearButton>
        </YearButtons>
      </Tool>
    </Group>
    <RightTools>
      <IconTool label="更新" icon={<RefreshIcon />} />
      <IconTool label="新規行" off icon={<NewRowIcon />} />
      <IconTool label="行挿入" off icon={<InsertRowIcon />} />
      <IconTool label="行複製" off icon={<CopyRowIcon />} />
      <Tool $w={64}>
        <ToolLabel>行入換</ToolLabel>
        <PairCol $w={64}>
          <PairButton><UpOutline /></PairButton>
          <PairButton><DownOutline /></PairButton>
        </PairCol>
      </Tool>
      <Tool $w={64}>
        <ToolLabel $off>付箋</ToolLabel>
        <PairRow>
          <PairSide><NoteTagIcon /></PairSide>
          <PairCol $w={32}>
            <PairButton><SolidUp /></PairButton>
            <PairButton><SolidDown /></PairButton>
          </PairCol>
        </PairRow>
      </Tool>
      <IconTool label="行削除" icon={<DeleteRowIcon />} />
      <IconTool label="印刷" icon={<PrintIcon />} />
      <IconTool label="閉じる" icon={<CloseIcon />} />
    </RightTools>
  </Toolbar>
);

const App = function () {
  return (
    <>
      <GlobalStyle />
      <Window>
        <TitleBar>
          <QuickAccess><QatIcon /></QuickAccess>
          <TitleText>よつや家具 (2022年(令和4年)10月30日)  -  出納らくだ23</TitleText>
          <TitleRight>
            <SignIn>サインイン</SignIn>
            <WinButton><WinMin /></WinButton>
            <WinButton><WinMax /></WinButton>
            <WinButton><WinClose /></WinButton>
          </TitleRight>
        </TitleBar>
        <MenuBar>
          {MENUS.map(([m, w, kana]) => (
            <MenuItem key={m} $w={w} $kana={kana}>{m}</MenuItem>
          ))}
          <MenuSpacer />
          <WinButton><WinMin color="#e06a6a" /></WinButton>
          <WinButton><WinRestore /></WinButton>
          <WinButton><WinClose /></WinButton>
        </MenuBar>
        <Client>
          <Workspace>
            <SideCol>
              {['出納帳', '売掛帳', '買掛帳', '科目別', '集計表', '台帳', '予算'].map((t) => (
                <SideTab key={t} $active={t === '科目別'}>{t}</SideTab>
              ))}
              <SideFill />
            </SideCol>
            <PanelCol>
              <SubjectPanel />
              <ConditionPanel />
              <NotePanel />
            </PanelCol>
            <MainCol>
              <MonthTabs>
                {MONTHS.map(([m, w, active]) => (
                  <MonthTab key={m} $w={w} $active={active}>{m}</MonthTab>
                ))}
              </MonthTabs>
              <TabPage>
                <Frame>
                  <Ledger />
                  <VBar>
                    <ScrollBtn><Tri dir="up" /></ScrollBtn>
                    <VTrack />
                    <VThumb />
                    <ScrollBtn><Tri dir="down" /></ScrollBtn>
                    <VBottom />
                  </VBar>
                  <HBar>
                    <ScrollBtn><Tri dir="left" /></ScrollBtn>
                    <HThumb />
                    <VTrack />
                    <ScrollBtn><Tri dir="right" /></ScrollBtn>
                  </HBar>
                  <Corner />
                </Frame>
              </TabPage>
            </MainCol>
          </Workspace>
          <BottomBar />
        </Client>
      </Window>
    </>
  );
};

export default App;
